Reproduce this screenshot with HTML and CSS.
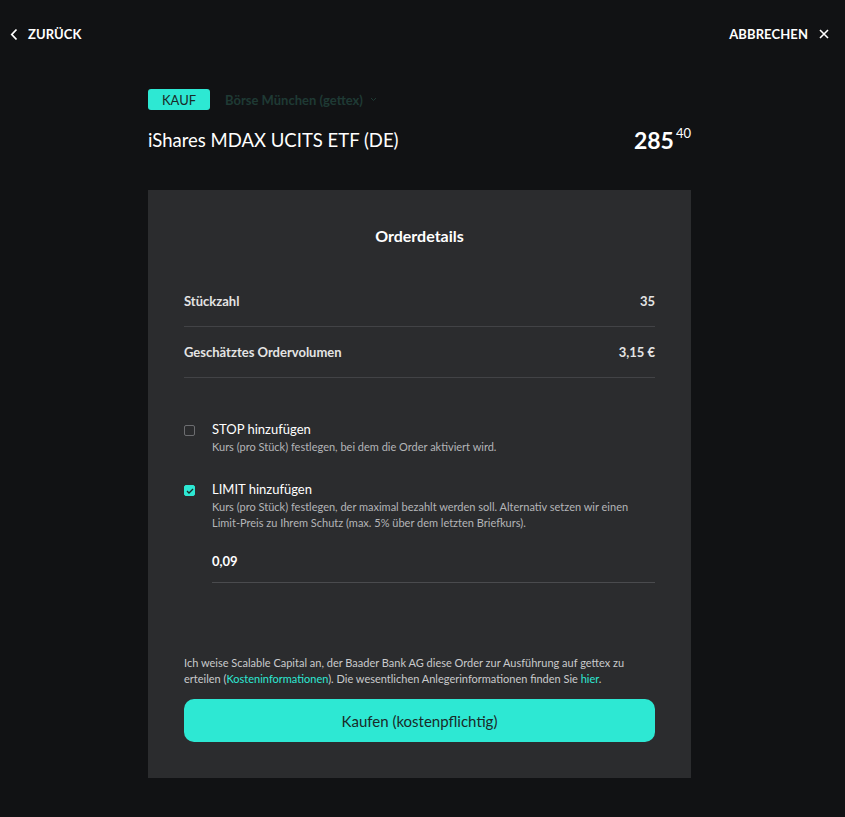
FILE: index.html
```html
<!DOCTYPE html>
<html lang="de">
<head>
<meta charset="utf-8">
<link rel="stylesheet" href="styles.css">
</head>
<body>
<header class="topbar">
  <a class="nav back"><svg width="8" height="13" viewBox="0 0 8 13"><path d="M6.5 1.5 L1.8 6.5 L6.5 11.5" fill="none" stroke="#fff" stroke-width="1.8"/></svg><span>ZURÜCK</span></a>
  <a class="nav cancel"><span>ABBRECHEN</span><svg width="10" height="10" viewBox="0 0 10 10"><path d="M1 1 L9 9 M9 1 L1 9" stroke="#fff" stroke-width="1.6"/></svg></a>
</header>
<main class="wrap">
  <div class="meta">
    <span class="badge">KAUF</span>
    <span class="venue">Börse München (gettex)<svg width="7" height="5" viewBox="0 0 7 5"><path d="M1 1 L3.5 3.5 L6 1" fill="none" stroke="#1f3a34" stroke-width="1"/></svg></span>
  </div>
  <div class="titlerow">
    <h1 class="title">iShares MDAX UCITS ETF (DE)</h1>
    <div class="price">285<sup>40</sup></div>
  </div>
  <section class="panel">
    <h2 class="panel-title">Orderdetails</h2>
    <div class="row"><span>Stückzahl</span><span>35</span></div>
    <div class="row"><span>Geschätztes Ordervolumen</span><span>3,15 €</span></div>
    <div class="opts">
      <div class="opt">
        <span class="box"></span>
        <div class="opt-body">
          <div class="opt-label">STOP hinzufügen</div>
          <div class="opt-desc">Kurs (pro Stück) festlegen, bei dem die Order aktiviert wird.</div>
        </div>
      </div>
      <div class="opt">
        <span class="box checked"><svg width="8" height="6" viewBox="0 0 8 6"><path d="M1 3 L3 5 L7 1" fill="none" stroke="#1a2a28" stroke-width="1.3"/></svg></span>
        <div class="opt-body">
          <div class="opt-label">LIMIT hinzufügen</div>
          <div class="opt-desc">Kurs (pro Stück) festlegen, der maximal bezahlt werden soll. Alternativ setzen wir einen Limit-Preis zu Ihrem Schutz (max. 5% über dem letzten Briefkurs).</div>
          <div class="limit-input">0,09</div>
        </div>
      </div>
    </div>
    <p class="disclaimer">Ich weise Scalable Capital an, der Baader Bank AG diese Order zur Ausführung auf gettex zu<br>erteilen (<a>Kosteninformationen</a>). Die wesentlichen Anlegerinformationen finden Sie <a>hier</a>.</p>
    <button class="buy">Kaufen (kostenpflichtig)</button>
  </section>
</main>
</body>
</html>
```
FILE: styles.css
```css
* { box-sizing: border-box; }
html, body { margin: 0; padding: 0; }
body {
  background: #111214;
  color: #fff;
  font-family: Lato, "Open Sans", sans-serif;
  width: 845px;
  height: 817px;
  overflow: hidden;
}
.topbar {
  display: flex;
  justify-content: space-between;
  align-items: center;
  height: 34px;
  margin-top: 17px;
  padding: 0 16px 0 10px;
}
.nav {
  display: flex;
  align-items: center;
  font-size: 13px;
  font-weight: 700;
  letter-spacing: 0.1px;
  color: #fff;
}
.back svg { margin-right: 10px; }
.cancel svg { margin-left: 11px; }
.wrap {
  width: 543px;
  margin: 38px 0 0 148px;
}
.meta {
  display: flex;
  align-items: center;
  height: 21px;
}
.badge {
  background: #2de8d3;
  color: #1a2a28;
  font-size: 13px;
  border-radius: 3px;
  width: 62px;
  height: 21px;
  display: flex;
  align-items: center;
  justify-content: center;
}
.venue {
  margin-left: 15px;
  color: #1f3a34;
  font-size: 13px;
  font-weight: 700;
  display: flex;
  align-items: center;
}
.venue svg { margin-left: 7px; }
.titlerow {
  display: flex;
  justify-content: space-between;
  align-items: center;
  margin-top: 17px;
  height: 26px;
}
.title {
  margin: 0;
  font-size: 18.5px;
  font-weight: 400;
}
.price {
  font-size: 23px;
  font-weight: 700;
  line-height: 1;
}
.price sup {
  font-size: 13px;
  font-weight: 400;
  vertical-align: top;
  position: relative;
  top: -2px;
  margin-left: 2px;
}
.panel {
  margin-top: 37px;
  background: #2b2c2e;
  height: 588px;
  padding: 36px 36px 0;
}
.panel-title {
  margin: 0 0 30px;
  text-align: center;
  font-size: 16px;
  font-weight: 700;
  line-height: 20px;
}
.row {
  display: flex;
  justify-content: space-between;
  align-items: center;
  height: 51px;
  border-bottom: 1px solid #424346;
  font-size: 13px;
  font-weight: 700;
  color: #e4e4e4;
}
.opts { padding-top: 42px; }
.opt {
  display: flex;
  align-items: flex-start;
  margin-bottom: 25px;
}
.box {
  width: 11px;
  height: 11px;
  border: 1px solid #6c6d70;
  border-radius: 2px;
  margin-top: 5px;
  margin-right: 17px;
  flex: none;
  display: flex;
  align-items: center;
  justify-content: center;
}
.box.checked {
  background: #2de8d3;
  border-color: #2de8d3;
}
.opt-body { flex: 1; }
.opt-label {
  font-size: 13px;
  line-height: 18px;
  color: #fff;
}
.opt-desc {
  font-size: 11px;
  line-height: 16px;
  color: #b4b5b8;
  margin-top: 1px;
}
.limit-input {
  margin-top: 22px;
  font-size: 13px;
  font-weight: 700;
  height: 30px;
  border-bottom: 1px solid #4a4b4e;
}
.disclaimer {
  margin: 72px 0 0;
  font-size: 11px;
  line-height: 16px;
  color: #c9cacc;
}
.disclaimer a { color: #2de8d3; }
.buy {
  display: block;
  width: 100%;
  height: 43px;
  margin-top: 12px;
  background: #2de8d3;
  border: none;
  border-radius: 10px;
  color: #1a2a28;
  font-family: inherit;
  font-size: 15px;
}
```
